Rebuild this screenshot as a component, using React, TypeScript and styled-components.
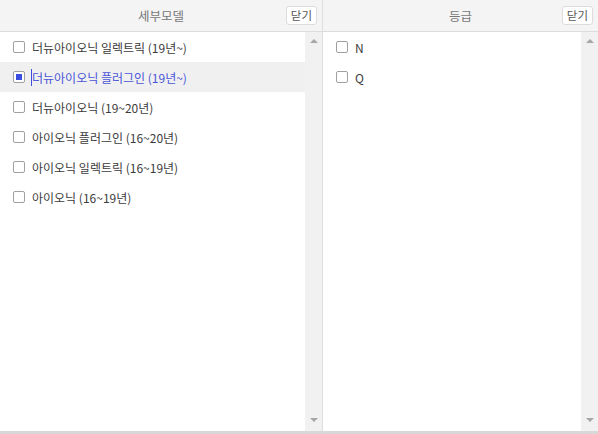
import styled, { createGlobalStyle } from "styled-components";

const GlobalStyle = createGlobalStyle`
  html, body {
    margin: 0;
    padding: 0;
    background: #fff;
  }
  body {
    font-family: "Noto Sans CJK KR", "Noto Sans", sans-serif;
  }
`;

const Layout = styled.div`
  width: 598px;
  height: 434px;
  display: flex;
  flex-direction: column;
  overflow: hidden;
`;

const Columns = styled.div`
  flex: 1;
  display: flex;
  min-height: 0;
`;

const Panel = styled.section<{ $width?: number }>`
  display: flex;
  flex-direction: column;
  width: ${(p) => (p.$width ? `${p.$width}px` : "auto")};
  flex: ${(p) => (p.$width ? "none" : "1")};
  border-right: ${(p) => (p.$width ? "1px solid #dedede" : "none")};
`;

const PanelHeader = styled.header`
  position: relative;
  height: 31px;
  background: #f4f4f4;
  border-bottom: 1px solid #dcdcdc;
  display: flex;
  align-items: center;
  justify-content: center;
  font-size: 12.5px;
  color: #777;
`;

const CloseButton = styled.button`
  position: absolute;
  right: 5px;
  top: 6px;
  height: 19px;
  padding: 0 4px;
  background: #fff;
  border: 1px solid #dcdcdc;
  border-radius: 3px;
  font-family: inherit;
  font-size: 11.5px;
  color: #555;
  line-height: 17px;
`;

const PanelBody = styled.div`
  flex: 1;
  display: flex;
  min-height: 0;
`;

const List = styled.ul`
  flex: 1;
  margin: 0;
  padding: 0;
  list-style: none;
`;

const Row = styled.li<{ $active?: boolean }>`
  height: 30px;
  display: flex;
  align-items: center;
  padding-left: 13px;
  gap: 7px;
  background: ${(p) => (p.$active ? "#f0f0f0" : "transparent")};
  color: ${(p) => (p.$active ? "#4a56d8" : "#3c3c3c")};
  font-size: 12px;
  white-space: nowrap;
`;

const Box = styled.span<{ $checked?: boolean }>`
  width: 10px;
  height: 10px;
  border: 1px solid #a0a0a0;
  border-radius: 2px;
  background: #fff;
  display: flex;
  align-items: center;
  justify-content: center;

  &::after {
    content: "";
    width: 6px;
    height: 6px;
    background: ${(p) => (p.$checked ? "#3b4ee0" : "transparent")};
  }
`;

const Label = styled.span<{ $focused?: boolean }>`
  border-left: ${(p) => (p.$focused ? "1px solid #3b4ee0" : "none")};
  margin-left: ${(p) => (p.$focused ? "-1px" : "0")};
`;

const Scrollbar = styled.div`
  width: 17px;
  background: #f1f1f1;
  display: flex;
  flex-direction: column;
  justify-content: space-between;
  align-items: center;
  padding: 7px 0 9px;
`;

const Arrow = styled.span<{ $down?: boolean }>`
  width: 0;
  height: 0;
  border-left: 4px solid transparent;
  border-right: 4px solid transparent;
  ${(p) =>
    p.$down
      ? "border-top: 4px solid #a6a6a6;"
      : "border-bottom: 4px solid #a6a6a6;"}
`;

const BottomBar = styled.div`
  height: 3px;
  background: #d8d8d8;
`;

type Item = { label: string; checked?: boolean; active?: boolean };

const models: Item[] = [
  { label: "더뉴아이오닉 일렉트릭 (19년~)" },
  { label: "더뉴아이오닉 플러그인 (19년~)", checked: true, active: true },
  { label: "더뉴아이오닉 (19~20년)" },
  { label: "아이오닉 플러그인 (16~20년)" },
  { label: "아이오닉 일렉트릭 (16~19년)" },
  { label: "아이오닉 (16~19년)" },
];

const grades: Item[] = [{ label: "N" }, { label: "Q" }];

const FilterPanel = ({
  title,
  items,
  width,
}: {
  title: string;
  items: Item[];
  width?: number;
}) => (
  <Panel $width={width}>
    <PanelHeader>
      {title}
      <CloseButton type="button">닫기</CloseButton>
    </PanelHeader>
    <PanelBody>
      <List>
        {items.map((item) => (
          <Row key={item.label} $active={item.active}>
            <Box $checked={item.checked} />
            <Label $focused={item.active}>{item.label}</Label>
          </Row>
        ))}
      </List>
      <Scrollbar>
        <Arrow />
        <Arrow $down />
      </Scrollbar>
    </PanelBody>
  </Panel>
);

const App = () => (
  <>
    <GlobalStyle />
    <Layout>
      <Columns>
        <FilterPanel title="세부모델" items={models} width={322} />
        <FilterPanel title="등급" items={grades} />
      </Columns>
      <BottomBar />
    </Layout>
  </>
);

export default App;
